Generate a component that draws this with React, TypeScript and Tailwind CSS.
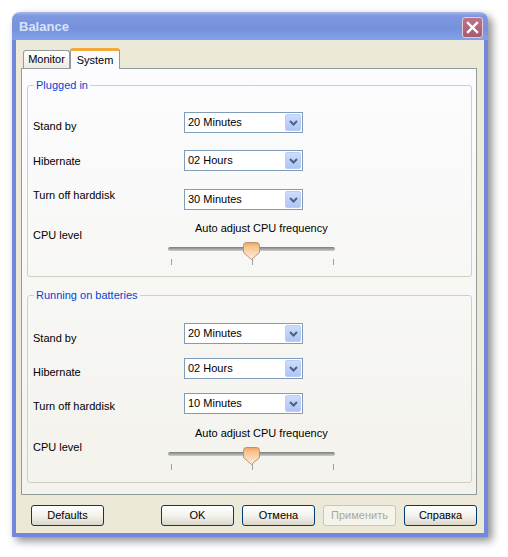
import React from 'react'

type Row = { label: string; value: string; mt: string; pt: string }

const plugged: Row[] = [
  { label: 'Stand by', value: '20 Minutes', mt: 'mt-[20px]', pt: 'pt-[8px]' },
  { label: 'Hibernate', value: '02 Hours', mt: 'mt-[17px]', pt: 'pt-[5px]' },
  { label: 'Turn off harddisk', value: '30 Minutes', mt: 'mt-[18px]', pt: 'pt-0' },
]

const batteries: Row[] = [
  { label: 'Stand by', value: '20 Minutes', mt: 'mt-[21px]', pt: 'pt-[9px]' },
  { label: 'Hibernate', value: '02 Hours', mt: 'mt-[14px]', pt: 'pt-[8px]' },
  { label: 'Turn off harddisk', value: '10 Minutes', mt: 'mt-[14px]', pt: 'pt-[7px]' },
]

function Combo({ value }: { value: string }) {
  return (
    <div className="w-[119px] h-[21px] border border-[#7f9db9] bg-white flex items-center justify-between">
      <span className="pl-[3px] leading-[13px]">{value}</span>
      <div className="w-[16px] h-[17px] m-[1px] rounded-[2px] border border-[#bccdf5] bg-gradient-to-b from-[#cddcfd] to-[#b0c5f6] flex items-center justify-center">
        <svg width="9" height="6" viewBox="0 0 9 6">
          <path d="M1 1 L4.5 4.5 L8 1" fill="none" stroke="#4d6185" strokeWidth="2" />
        </svg>
      </div>
    </div>
  )
}

function Slider({ labelPt }: { labelPt: string }) {
  return (
    <div className="flex">
      <div className={`w-[135px] leading-[13px] ${labelPt}`}>CPU level</div>
      <div className="w-[167px]">
        <div className="pl-[27px] leading-[13px] whitespace-nowrap">Auto adjust CPU frequency</div>
        <div className="relative h-[26px] mt-[5px]">
          <div className="absolute left-0 right-0 top-[7px] h-[4px] rounded-full bg-gradient-to-b from-[#7c7c7c] to-[#cfcfcf]" />
          <div className="absolute left-[3px] top-[19px] w-px h-[6px] bg-[#a0a0a0]" />
          <div className="absolute left-[84px] top-[19px] w-px h-[6px] bg-[#a0a0a0]" />
          <div className="absolute left-[165px] top-[19px] w-px h-[6px] bg-[#a0a0a0]" />
          <svg className="absolute left-[75px] top-[2px]" width="17" height="19" viewBox="0 0 17 19">
            <defs>
              <linearGradient id="thumb" x1="0" y1="0" x2="0" y2="1">
                <stop offset="0%" stopColor="#eda35a" />
                <stop offset="25%" stopColor="#f7c390" />
                <stop offset="70%" stopColor="#fddcbd" />
                <stop offset="100%" stopColor="#fff3ec" />
              </linearGradient>
            </defs>
            <path
              d="M3.5 0.5 H13.5 Q16.5 0.5 16.5 3.5 V10.5 L8.5 17.5 L0.5 10.5 V3.5 Q0.5 0.5 3.5 0.5 Z"
              fill="url(#thumb)"
              stroke="#b8946e"
            />
          </svg>
        </div>
      </div>
    </div>
  )
}

function Group({
  title,
  rows,
  className,
  sliderMt,
  sliderPt,
}: {
  title: string
  rows: Row[]
  className: string
  sliderMt: string
  sliderPt: string
}) {
  return (
    <fieldset className={`border border-[#d0d0bf] rounded-[3px] ${className}`}>
      <legend className="ml-[6px] px-[2px] leading-[13px] text-[#0046d5]">{title}</legend>
      <div className="pl-[5px]">
        {rows.map((r) => (
          <div key={r.label} className={`flex h-[21px] ${r.mt}`}>
            <div className={`w-[151px] leading-[13px] whitespace-nowrap ${r.pt}`}>{r.label}</div>
            <Combo value={r.value} />
          </div>
        ))}
        <div className={sliderMt}>
          <Slider labelPt={sliderPt} />
        </div>
      </div>
    </fieldset>
  )
}

function Button({ children, disabled }: { children: React.ReactNode; disabled?: boolean }) {
  return (
    <div
      className={
        disabled
          ? 'w-[73px] h-[21px] rounded-[3px] border border-[#c9c7ba] bg-[#f5f4ea] text-[#aca899] flex items-center justify-center'
          : 'w-[73px] h-[21px] rounded-[3px] border border-[#003c74] bg-gradient-to-b from-white via-[#f3f2ec] to-[#dcd7cb] flex items-center justify-center'
      }
    >
      {children}
    </div>
  )
}

export default function App() {
  return (
    <div className="w-[508px] h-[557px] bg-white pl-[12px] pt-[12px] font-['Liberation_Sans',Arial,sans-serif] text-[11px] text-black">
      <div className="w-[476px] h-[525px] flex flex-col rounded-t-[8px] shadow-[4px_4px_9px_rgba(0,0,0,0.45)]">
        {/* Title bar */}
        <div className="h-[28px] rounded-t-[8px] bg-[linear-gradient(to_bottom,#a5baee_0%,#7e98e0_14%,#7691dd_60%,#80a3e8_100%)] flex items-start justify-between pl-[7px] pr-[5px] pt-[5px]">
          <span className="mt-[2px] text-[13px] leading-[16px] font-bold text-[#d9e3f8]">Balance</span>
          <div className="w-[21px] h-[21px] rounded-[3px] border border-[#e6cdd4] bg-gradient-to-b from-[#bd7488] to-[#a95a70] flex items-center justify-center">
            <svg width="13" height="13" viewBox="0 0 13 13">
              <path d="M2 2 L11 11 M11 2 L2 11" stroke="white" strokeWidth="2.4" strokeLinecap="square" />
            </svg>
          </div>
        </div>

        {/* Client area */}
        <div className="flex-1 border-x-[4px] border-b-[4px] border-[#7388dc] bg-[#ece9d8] flex flex-col pt-[8px] pl-[5px] pr-[7px]">
          {/* Tabs */}
          <div className="flex items-end h-[20px] pl-[2px]">
            <div className="w-[47px] h-[18px] rounded-t-[3px] border-x border-t border-[#919b9c] bg-gradient-to-b from-white to-[#ecebe5] flex items-center justify-center leading-[13px]">
              Monitor
            </div>
            <div className="relative z-10 -mb-px w-[50px] h-[21px] rounded-t-[3px] border-x border-[#919b9c] border-t-[3px] border-t-[#f3a93c] bg-[#fcfcfe] flex items-center justify-center leading-[13px]">
              System
            </div>
          </div>

          {/* Panel */}
          <div className="h-[427px] border border-[#919b9c] bg-gradient-to-b from-[#fcfcfe] to-[#f3f2ec] pl-[5px] pr-[4px] pt-[10px]">
            <Group
              title="Plugged in"
              rows={plugged}
              className="h-[198px]"
              sliderMt="mt-[12px]"
              sliderPt="pt-[7px]"
            />
            <Group
              title="Running on batteries"
              rows={batteries}
              className="h-[194px] mt-[12px]"
              sliderMt="mt-[13px]"
              sliderPt="pt-[14px]"
            />
          </div>

          {/* Buttons */}
          <div className="flex mt-[10px] pl-[10px]">
            <Button>Defaults</Button>
            <div className="ml-auto flex gap-[8px]">
              <Button>OK</Button>
              <Button>Отмена</Button>
              <Button disabled>Применить</Button>
              <Button>Справка</Button>
            </div>
          </div>
        </div>
      </div>
    </div>
  )
}
